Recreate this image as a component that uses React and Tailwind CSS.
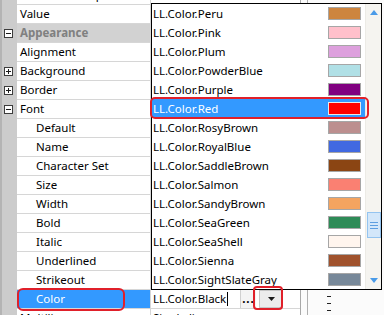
import React from "react";

const props = [
  { name: "Format Description", level: 0 },
  { name: "Value", level: 0 },
  { name: "Appearance", level: 0, cat: true, icon: "minus" },
  { name: "Alignment", level: 0 },
  { name: "Background", level: 0, icon: "plus" },
  { name: "Border", level: 0, icon: "plus" },
  { name: "Font", level: 0, icon: "minus" },
  { name: "Default", level: 1 },
  { name: "Name", level: 1 },
  { name: "Character Set", level: 1 },
  { name: "Size", level: 1 },
  { name: "Width", level: 1 },
  { name: "Bold", level: 1 },
  { name: "Italic", level: 1 },
  { name: "Underlined", level: 1 },
  { name: "Strikeout", level: 1 },
  { name: "Color", level: 1, sel: true },
  { name: "Multiline", level: 0 },
];

const colors = [
  ["Peru", "#cd853f"],
  ["Pink", "#ffc0cb"],
  ["Plum", "#dda0dd"],
  ["PowderBlue", "#b0e0e6"],
  ["Purple", "#800080"],
  ["Red", "#ff0000"],
  ["RosyBrown", "#bc8f8f"],
  ["RoyalBlue", "#4169e1"],
  ["SaddleBrown", "#8b4513"],
  ["Salmon", "#fa8072"],
  ["SandyBrown", "#f4a460"],
  ["SeaGreen", "#2e8b57"],
  ["SeaShell", "#fff5ee"],
  ["Sienna", "#a0522d"],
  ["SightSlateGray", "#778899"],
];

function Box({ type }) {
  return (
    <div className="w-[9px] h-[9px] border border-[#3c3c3c] bg-white flex items-center justify-center relative">
      <div className="w-[5px] h-px bg-[#1a1a1a]" />
      {type === "plus" && <div className="absolute w-px h-[5px] bg-[#1a1a1a]" />}
    </div>
  );
}

function Row({ p }) {
  return (
    <div className={`flex h-[19px] shrink-0 ${p.cat ? "bg-[#d2d2d2]" : ""}`}>
      <div className="w-[17px] shrink-0 bg-[#cccccc] border-l-2 border-[#b4b4b4] flex items-center pl-[2px]">
        {p.icon && <Box type={p.icon} />}
      </div>
      <div
        className={`w-[133px] shrink-0 flex items-center border-b border-[#d6d6d6] leading-none ${
          p.level === 1 ? "pl-[19px]" : "pl-[3px]"
        } ${p.sel ? "bg-[#3399ff] text-white" : ""} ${
          p.cat ? "text-[#808080] font-bold border-[#d2d2d2]" : p.sel ? "" : "text-black"
        }`}
      >
        {p.name}
      </div>
      <div className={`flex-1 border-b border-l border-[#d6d6d6] ${p.cat ? "border-[#d2d2d2]" : ""}`}>
        {p.sel && (
          <div className="flex h-full items-stretch">
            <div className="w-[89px] flex items-center pl-[2px] text-black bg-white">
              LL.Color.Black
              <span className="inline-block w-px h-[14px] bg-black ml-[1px]" />
            </div>
            <div className="w-[16px] flex items-end justify-center pb-[4px] font-bold text-black bg-[#f4f4f4] border-l border-[#d0d0d0]">
              <span className="leading-none tracking-[1px]">...</span>
            </div>
            <div className="w-[24px] ml-[3px] flex items-center justify-center bg-[#ececec] border border-[#c6c6c6]">
              <svg width="7" height="4" viewBox="0 0 7 4">
                <path d="M0 0 H7 L3.5 4 Z" fill="#1a1a1a" />
              </svg>
            </div>
          </div>
        )}
        {p.name === "Multiline" && <div className="pl-[2px] text-black">Single line</div>}
      </div>
    </div>
  );
}

export default function App() {
  return (
    <div className="relative w-[384px] h-[315px] overflow-hidden bg-white text-[11.5px] font-['Noto_Sans',sans-serif]">
      <div className="flex h-full">
        <div className="w-[300px] shrink-0 flex flex-col -mt-[14px]">
          {props.map((p) => (
            <Row key={p.name} p={p} />
          ))}
        </div>
        <div className="flex-1 flex border-l border-[#a8a8a8] bg-[#fbfbfb]">
          <div className="w-[6px]" />
          <div className="flex-1 border-l border-[#b0b0b0] relative">
            <div className="absolute left-[2px] top-[281px] text-[10px] leading-none text-[#333]">or</div>
            <div className="absolute left-[19px] top-[296px] w-[4px] h-px bg-[#222]" />
            <div className="absolute left-[19px] top-[303px] w-[4px] h-px bg-[#222]" />
            <div className="absolute left-[19px] top-[310px] w-[4px] h-px bg-[#222]" />
          </div>
        </div>
      </div>

      {/* dropdown list */}
      <div className="absolute left-[151px] top-[3px] w-[231px] h-[287px] border border-black bg-white flex">
        <div className="flex-1 flex flex-col">
          {colors.map(([n, c]) => {
            const sel = n === "Red";
            return (
              <div
                key={n}
                className={`h-[19px] shrink-0 flex items-center pl-[1px] pr-[4px] ${
                  sel ? "bg-[#3399ff] text-white" : "text-black"
                }`}
              >
                <span className="flex-1 leading-none">LL.Color.{n}</span>
                <div
                  className={`w-[33px] h-[13px] border ${sel ? "border-[#e8e8e8]" : "border-[#a6a6a6]"}`}
                  style={{ backgroundColor: c }}
                />
              </div>
            );
          })}
        </div>
        <div className="w-[16px] shrink-0 bg-[#f5f4f0] border-l border-[#ecebe6] flex flex-col items-center">
          <div className="h-[17px] flex items-center justify-center">
            <svg width="8" height="5" viewBox="0 0 8 5">
              <path d="M0 5 L4 0 L8 5 Z" fill="#4a9be8" />
            </svg>
          </div>
          <div className="mt-[191px] w-[14px] h-[26px] bg-[#d3e7fa] border border-[#94c4f0] flex flex-col items-center justify-center gap-[2px]">
            <div className="w-[8px] h-px bg-[#5d9ee0]" />
            <div className="w-[8px] h-px bg-[#5d9ee0]" />
            <div className="w-[8px] h-px bg-[#5d9ee0]" />
          </div>
          <div className="flex-1" />
          <div className="h-[17px] flex items-center justify-center">
            <svg width="8" height="5" viewBox="0 0 8 5">
              <path d="M0 0 L8 0 L4 5 Z" fill="#4a9be8" />
            </svg>
          </div>
        </div>
      </div>

      {/* red highlight outlines */}
      <div className="absolute left-[150px] top-[97px] w-[219px] h-[22px] border-2 border-[#e0202a] rounded-[5px]" />
      <div className="absolute left-[17px] top-[288px] w-[108px] h-[23px] border-2 border-[#e0202a] rounded-[6px]" />
      <div className="absolute left-[253px] top-[286px] w-[30px] h-[24px] border-2 border-[#e0202a] rounded-[4px]" />
    </div>
  );
}
